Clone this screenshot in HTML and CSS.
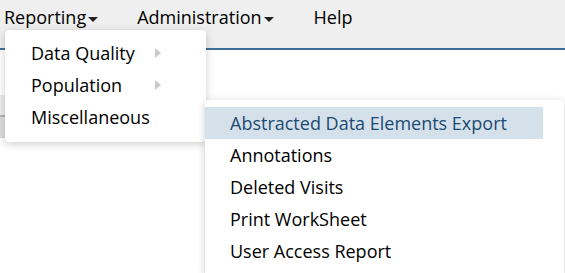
FILE: index.html
```html
<!DOCTYPE html>
<html lang="en">
<head>
  <meta charset="UTF-8" />
  <title>Reporting menu</title>
  <link rel="stylesheet" href="styles.css">
</head>
<body>
  <nav class="topnav">
    <div class="nav-item open">Reporting<span class="caret"></span>
      <ul class="menu menu-main">
        <li class="has-sub">Data Quality<span class="sub-arrow"></span></li>
        <li class="has-sub">Population<span class="sub-arrow"></span></li>
        <li class="open">Miscellaneous
          <ul class="menu menu-sub">
            <li class="active">Abstracted Data Elements Export</li>
            <li>Annotations</li>
            <li>Deleted Visits</li>
            <li>Print WorkSheet</li>
            <li>User Access Report</li>
          </ul>
        </li>
      </ul>
    </div>
    <div class="nav-item">Administration<span class="caret"></span></div>
    <div class="nav-item">Help</div>
  </nav>
  <main class="page">
    <div class="side-panel">
      <div class="panel-head"></div>
      <div class="panel-body"></div>
    </div>
  </main>
</body>
</html>
```

FILE: styles.css
```css
*,*::before,*::after{box-sizing:border-box;margin:0;padding:0}
body{font-family:'Open Sans',sans-serif;font-size:18px;color:#000;background:#fff;overflow:hidden;height:273px}
.topnav{display:flex;align-items:flex-start;gap:39px;height:50px;padding:0 0 0 4px;background:#efefef;border-bottom:2px solid #3d6d98}
.nav-item{position:relative;line-height:34px;white-space:nowrap;color:#000}
.nav-item+.nav-item+.nav-item{margin-left:1px}
.caret{display:inline-block;margin-left:2px;vertical-align:middle;border-left:5px solid transparent;border-right:5px solid transparent;border-top:5px solid #222}
.menu{list-style:none;position:absolute;background:#fff;border-radius:4px;box-shadow:0 2px 8px rgba(0,0,0,.2);z-index:2}
.menu li{position:relative;line-height:32px;white-space:nowrap}
.menu-main{left:1px;top:30px;width:201px;padding:7px 0 9px}
.menu-main>li{padding-left:26px}
.sub-arrow{position:absolute;left:150px;top:11px;border-top:5px solid transparent;border-bottom:5px solid transparent;border-left:6px solid #c8c8c8}
.menu-sub{left:200px;top:-1px;width:359px;padding:7px 0 10px;z-index:3}
.menu-sub li{padding-left:25px;margin-right:21px;color:#000}
.menu-sub li.active{background:#d4e1eb;color:#1d4a72}
.page{position:relative;height:223px}
.side-panel{width:6px;margin-top:45px;border-right:1px solid #e2e2e2}
.panel-head{height:22px;background:#ececec;border-bottom:2px solid #b4b4b4}
.panel-body{height:21px;background:#dcdcdc}
```
